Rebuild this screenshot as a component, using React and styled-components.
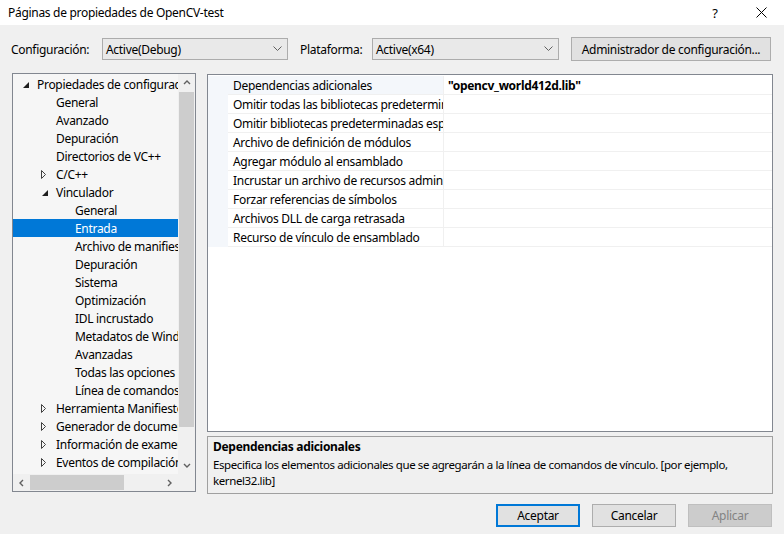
import React from "react";
import styled, { createGlobalStyle } from "styled-components";

const GlobalStyle = createGlobalStyle`
  html, body {
    margin: 0;
    padding: 0;
    background: #f0f0f0;
  }
  body {
    font-family: "Noto Sans", "Segoe UI", sans-serif;
    font-size: 12px;
    letter-spacing: -0.3px;
    color: #000;
  }
  * { box-sizing: border-box; }
`;

const TREE = [
    { label: "Propiedades de configuración", level: 0, arrow: "open" },
    { label: "General", level: 1 },
    { label: "Avanzado", level: 1 },
    { label: "Depuración", level: 1 },
    { label: "Directorios de VC++", level: 1 },
    { label: "C/C++", level: 1, arrow: "closed" },
    { label: "Vinculador", level: 1, arrow: "open" },
    { label: "General", level: 2 },
    { label: "Entrada", level: 2, selected: true },
    { label: "Archivo de manifiesto", level: 2 },
    { label: "Depuración", level: 2 },
    { label: "Sistema", level: 2 },
    { label: "Optimización", level: 2 },
    { label: "IDL incrustado", level: 2 },
    { label: "Metadatos de Windows", level: 2 },
    { label: "Avanzadas", level: 2 },
    { label: "Todas las opciones", level: 2 },
    { label: "Línea de comandos", level: 2 },
    { label: "Herramienta Manifiesto", level: 1, arrow: "closed" },
    { label: "Generador de documentos XML", level: 1, arrow: "closed" },
    { label: "Información de examen", level: 1, arrow: "closed" },
    { label: "Eventos de compilación", level: 1, arrow: "closed" },
];

const PROPS = [
    { name: "Dependencias adicionales", value: "\"opencv_world412d.lib\"", selected: true },
    { name: "Omitir todas las bibliotecas predeterminadas", value: "" },
    { name: "Omitir bibliotecas predeterminadas específicas", value: "" },
    { name: "Archivo de definición de módulos", value: "" },
    { name: "Agregar módulo al ensamblado", value: "" },
    { name: "Incrustar un archivo de recursos administrado", value: "" },
    { name: "Forzar referencias de símbolos", value: "" },
    { name: "Archivos DLL de carga retrasada", value: "" },
    { name: "Recurso de vínculo de ensamblado", value: "" },
];

const Dialog = styled.div`
  width: 784px;
  height: 534px;
  display: flex;
  flex-direction: column;
  background: #f0f0f0;
  overflow: hidden;
`;

const TitleBar = styled.div`
  height: 25px;
  background: #fff;
  display: flex;
  align-items: center;
  padding-left: 8px;
`;

const Title = styled.div`
  flex: 1;
  white-space: nowrap;
`;

const TitleButton = styled.div`
  width: 46px;
  height: 25px;
  display: flex;
  align-items: center;
  justify-content: center;
  font-size: 13px;
`;

const ConfigBar = styled.div`
  margin-top: 12px;
  height: 24px;
  padding: 0 11px;
  display: flex;
  align-items: center;
`;

const Label = styled.div`
  width: ${p => p.w}px;
  white-space: nowrap;
`;

const Combo = styled.div`
  width: ${p => p.w}px;
  height: 22px;
  margin-right: 12px;
  border: 1px solid #acacac;
  background: #e9e9e9;
  display: flex;
  align-items: center;
  justify-content: space-between;
  padding: 0 5px 0 3px;
`;

const Button = styled.div`
  width: ${p => p.w || 84}px;
  height: ${p => p.h || 23}px;
  display: flex;
  align-items: center;
  justify-content: center;
  background: ${p => (p.disabled ? "#cccccc" : "#e1e1e1")};
  color: ${p => (p.disabled ? "#838383" : "#000")};
  border: ${p => (p.primary ? "2px solid #0078d7" : p.disabled ? "1px solid #bfbfbf" : "1px solid #adadad")};
  white-space: nowrap;
`;

const Main = styled.div`
  margin-top: 12px;
  height: 421px;
  padding: 0 11px 0 12px;
  display: flex;
  align-items: flex-start;
  gap: 11px;
`;

const Tree = styled.div`
  width: 184px;
  height: 419px;
  border: 1px solid #828790;
  display: grid;
  grid-template-columns: 1fr 17px;
  grid-template-rows: 1fr 17px;
`;

const TreeContent = styled.div`
  background: #f6f6f6;
  overflow: hidden;
  padding-top: 1px;
`;

const TreeRow = styled.div`
  height: 18px;
  display: flex;
  align-items: center;
  padding-left: ${p => 5 + p.level * 19}px;
  white-space: nowrap;
  background: ${p => (p.selected ? "#0078d7" : "transparent")};
  color: ${p => (p.selected ? "#fff" : "#000")};
`;

const Expander = styled.div`
  width: 19px;
  flex: none;
  display: flex;
  align-items: center;
  padding-left: 4px;
`;

const ScrollTrack = styled.div`
  background: #f0f0f0;
  display: flex;
  flex-direction: ${p => (p.horizontal ? "row" : "column")};
`;

const ScrollArrow = styled.div`
  width: 17px;
  height: 17px;
  flex: none;
  display: flex;
  align-items: center;
  justify-content: center;
`;

const ScrollThumb = styled.div`
  background: #cdcdcd;
  flex: none;
  ${p => (p.horizontal
        ? `width: ${p.size}px; margin: 1px 0;`
        : `height: ${p.size}px; margin: 1px 1px 0;`)}
`;

const ScrollSpacer = styled.div`
  flex: 1;
`;

const Corner = styled.div`
  background: #f0f0f0;
`;

const RightColumn = styled.div`
  flex: 1;
  display: flex;
  flex-direction: column;
  gap: 4px;
`;

const Grid = styled.div`
  margin-top: 1px;
  height: 358px;
  border: 1px solid #828790;
  background: #fff;
  padding-top: 1px;
`;

const PropRow = styled.div`
  height: 19px;
  display: flex;
`;

const Gutter = styled.div`
  width: 20px;
  flex: none;
  background: #f4f7fb;
`;

const PropName = styled.div`
  width: 216px;
  flex: none;
  padding-left: 5px;
  display: flex;
  align-items: center;
  overflow: hidden;
  white-space: nowrap;
  border-bottom: 1px solid #f0f0f0;
  border-right: 1px solid #f0f0f0;
  background: ${p => (p.selected ? "#f4f7fb" : "#fff")};
`;

const PropValue = styled.div`
  flex: 1;
  padding-left: 4px;
  display: flex;
  align-items: center;
  font-weight: bold;
  white-space: nowrap;
  border-bottom: 1px solid #f0f0f0;
`;

const Description = styled.div`
  height: 58px;
  border: 1px solid #a0a0a0;
  padding: 2px 5px 0;
  line-height: 16px;
`;

const DescTitle = styled.div`
  font-weight: bold;
  margin-bottom: 2px;
`;

const DescText = styled.div`
  font-size: 11.5px;
  letter-spacing: -0.4px;
`;

const Footer = styled.div`
  padding: 10px 12px 0 0;
  display: flex;
  justify-content: flex-end;
  gap: 12px;
`;

const Chevron = ({ dir }) => {
    const pts = {
        up: "1,5 4,2 7,5",
        down: "1,2 4,5 7,2",
        left: "5,1 2,4 5,7",
        right: "2,1 5,4 2,7",
    }[dir];
    return (
        <svg width="8" height="8" viewBox="0 0 8 8">
            <polyline points={pts} fill="none" stroke="#606060" strokeWidth="1.4" />
        </svg>
    );
};

const Arrow = ({ kind }) => (
    <svg width="9" height="9" viewBox="0 0 9 9">
        {kind === "open"
            ? <polygon points="7,2 7,8 1,8" fill="#1e1e1e" />
            : <polygon points="0.5,0.5 4.5,4.5 0.5,8.5" fill="none" stroke="#404040" strokeWidth="1" />}
    </svg>
);

const ComboArrow = () => (
    <svg width="9" height="6" viewBox="0 0 9 6">
        <polyline points="0.5,0.5 4.5,4.5 8.5,0.5" fill="none" stroke="#606060" strokeWidth="1" />
    </svg>
);

const CloseIcon = () => (
    <svg width="11" height="11" viewBox="0 0 11 11">
        <path d="M0.5 0.5 L10.5 10.5 M10.5 0.5 L0.5 10.5" stroke="#000" strokeWidth="1" />
    </svg>
);

const App = () => {
    return (
        <Dialog>
            <GlobalStyle />
            <TitleBar>
                <Title>Páginas de propiedades de OpenCV-test</Title>
                <TitleButton>?</TitleButton>
                <TitleButton><CloseIcon /></TitleButton>
            </TitleBar>

            <ConfigBar>
                <Label w={91}>Configuración:</Label>
                <Combo w={186}>
                    <span>Active(Debug)</span>
                    <ComboArrow />
                </Combo>
                <Label w={72}>Plataforma:</Label>
                <Combo w={187}>
                    <span>Active(x64)</span>
                    <ComboArrow />
                </Combo>
                <Button w={200} h={24}>Administrador de configuración...</Button>
            </ConfigBar>

            <Main>
                <Tree>
                    <TreeContent>
                        {TREE.map((item, i) => (
                            <TreeRow key={i} level={item.level} selected={item.selected}>
                                <Expander>{item.arrow && <Arrow kind={item.arrow} />}</Expander>
                                {item.label}
                            </TreeRow>
                        ))}
                    </TreeContent>
                    <ScrollTrack>
                        <ScrollArrow><Chevron dir="up" /></ScrollArrow>
                        <ScrollThumb size={335} />
                        <ScrollSpacer />
                        <ScrollArrow><Chevron dir="down" /></ScrollArrow>
                    </ScrollTrack>
                    <ScrollTrack horizontal>
                        <ScrollArrow><Chevron dir="left" /></ScrollArrow>
                        <ScrollThumb horizontal size={94} />
                        <ScrollSpacer />
                        <ScrollArrow><Chevron dir="right" /></ScrollArrow>
                    </ScrollTrack>
                    <Corner />
                </Tree>

                <RightColumn>
                    <Grid>
                        {PROPS.map((p, i) => (
                            <PropRow key={i}>
                                <Gutter />
                                <PropName selected={p.selected}>{p.name}</PropName>
                                <PropValue>{p.value}</PropValue>
                            </PropRow>
                        ))}
                    </Grid>
                    <Description>
                        <DescTitle>Dependencias adicionales</DescTitle>
                        <DescText>
                            Especifica los elementos adicionales que se agregarán a la línea de comandos de vínculo. [por ejemplo, kernel32.lib]
                        </DescText>
                    </Description>
                </RightColumn>
            </Main>

            <Footer>
                <Button primary>Aceptar</Button>
                <Button>Cancelar</Button>
                <Button disabled>Aplicar</Button>
            </Footer>
        </Dialog>
    );
};

export default App;
